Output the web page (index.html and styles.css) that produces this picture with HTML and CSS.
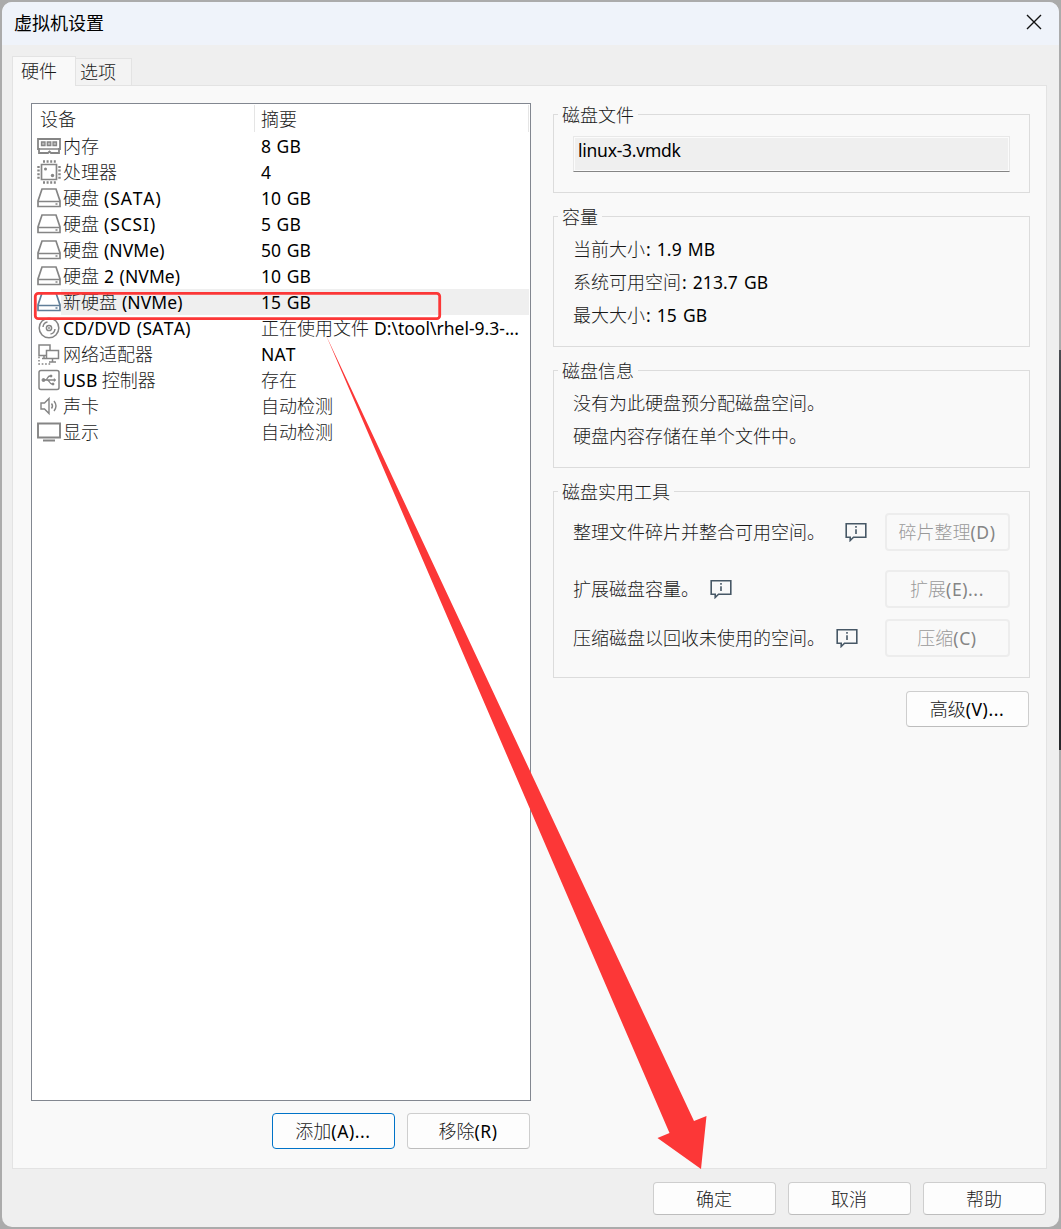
FILE: index.html
```html
<!DOCTYPE html>
<html lang="zh-CN">
<head>
<meta charset="utf-8">
<title>虚拟机设置</title>
<link rel="stylesheet" href="styles.css">
</head>
<body>
<svg class="defs" width="0" height="0" aria-hidden="true">
  <symbol id="disk" viewBox="0 0 24 20"><path d="M5 1h14l4 12v5.500H1V13zM1 13.500h22" fill="#fff" stroke="currentColor" stroke-width="1.700"/><path d="M18.500 16h2" stroke="currentColor" stroke-width="1.500"/></symbol>
  <symbol id="info" viewBox="0 0 22 20"><path d="M1.200 1.700h19.600v13.600H8.500L5.200 18.500v-3.200h-4z" fill="none" stroke="#475866" stroke-width="1.600"/><path d="M11 4v1.800M11 7.200V12" stroke="#475866" stroke-width="1.600"/></symbol>
</svg>
<main class="window">
  <header class="titlebar"><h1>虚拟机设置</h1>
    <svg class="close" viewBox="0 0 16 16"><path d="M1 1l14 14M15 1L1 15" stroke="#111" stroke-width="1.400"/></svg>
  </header>
  <nav class="tabs"><span class="tab active">硬件</span><span class="tab">选项</span></nav>
  <section class="panel">
    <div class="left">
      <div class="list">
        <div class="head"><span>设备</span><span>摘要</span></div>
        <div class="row"><svg viewBox="0 0 24 20"><path d="M1 3h22v10h-1v4h-8l-1.500-1.500L11 17H2v-4H1z" fill="none" stroke="currentColor" stroke-width="1.800"/><path d="M2 13h20" stroke="currentColor" stroke-width="1.300"/><path d="M4.500 6h3.500v3.500H4.500zM10.300 6h3.500v3.500h-3.500zM16 6h3.500v3.500H16z" fill="#bbb" stroke="currentColor" stroke-width="1.300"/></svg><span>内存</span><span class="en">8 GB</span></div>
        <div class="row"><svg class="tall" viewBox="0 0 24 24"><path d="M4.500 4.500h15v15h-15z" fill="none" stroke="currentColor" stroke-width="1.700"/><path d="M6 1.500h13M6 22.500h13" stroke="currentColor" stroke-width="2.400" stroke-dasharray="2 1.600"/><path d="M1.500 6v13M22.500 6v13" stroke="currentColor" stroke-width="2.400" stroke-dasharray="2 1.600"/><circle cx="8.500" cy="9" r="1.500" fill="currentColor"/><circle cx="15.500" cy="15.500" r="1.700" fill="currentColor"/></svg><span>处理器</span><span class="en">4</span></div>
        <div class="row"><svg><use href="#disk"/></svg><span>硬盘 <b class="en caps">(SATA)</b></span><span class="en">10 GB</span></div>
        <div class="row"><svg><use href="#disk"/></svg><span>硬盘 <b class="en caps">(SCSI)</b></span><span class="en">5 GB</span></div>
        <div class="row"><svg><use href="#disk"/></svg><span>硬盘 <b class="en">(NVMe)</b></span><span class="en">50 GB</span></div>
        <div class="row"><svg><use href="#disk"/></svg><span>硬盘 <b class="en">2 (NVMe)</b></span><span class="en">10 GB</span></div>
        <div class="row selected"><svg><use href="#disk"/></svg><span>新硬盘 <b class="en">(NVMe)</b></span><span class="en">15 GB</span></div>
        <div class="row"><svg class="tall" viewBox="0 0 24 24" fill="none" stroke="currentColor"><circle cx="12" cy="12" r="9.800" stroke-width="1.500"/><circle cx="12" cy="12" r="2.600" stroke-width="1.500"/><circle cx="12" cy="12" r=".6"/><path d="M6 11c.3-2.500 2-4.700 4.500-5M18 13c-.3 2.500-2 4.700-4.500 5" stroke-width="1.500"/></svg><span class="en disc">CD/DVD (SATA)</span><span>正在使用文件 <b class="en path">D:\tool\rhel-9.3-...</b></span></div>
        <div class="row"><svg class="tall" viewBox="0 0 24 24" fill="none" stroke="currentColor" stroke-width="1.500"><path d="M9 13.500H2V3h11v5M5 16.500h4M7 13v3M9.500 8.500h12v8h-12zM15.500 17v3M12 20h7"/><path d="M2 14.500v7.500h12" stroke-dasharray="1.700 1.700"/></svg><span>网络适配器</span><span class="en">NAT</span></div>
        <div class="row"><svg class="tall" viewBox="0 0 24 24" fill="none" stroke="currentColor"><rect x="2" y="2.500" width="20" height="19" rx="2" stroke-width="1.500"/><path d="M6 12h12M8 12c3 0 2-4 5-4h1M10 12c3 0 2 4 5 4" stroke-width="1.300"/><circle cx="6.500" cy="12" r="1.500" fill="currentColor"/><path d="M13 7h2v2h-2zM15 15h2v2h-2zM17 10.500l2 1.500-2 1.500z" fill="currentColor" stroke-width=".5"/></svg><span><b class="en caps-s">USB</b> 控制器</span><span>存在</span></div>
        <div class="row"><svg viewBox="0 0 24 20" fill="none" stroke="currentColor" stroke-width="1.400"><path d="M4 7h3.500l4.500-4.500v15L7.500 13H4zM14.500 7.500q2 2.500 0 5M17 5q4 5 0 10"/></svg><span>声卡</span><span>自动检测</span></div>
        <div class="row"><svg viewBox="0 0 24 20"><path d="M1 1.500h22v14H1z" fill="none" stroke="currentColor" stroke-width="1.900"/><path d="M6 18.500h12" stroke="currentColor" stroke-width="2"/></svg><span>显示</span><span>自动检测</span></div>
      </div>
      <div class="actions"><button class="focus">添加<b class="en">(A)...</b></button><button>移除<b class="en">(R)</b></button></div>
    </div>
    <div class="right">
      <fieldset class="file"><legend>磁盘文件</legend><div class="field en">linux-3.vmdk</div></fieldset>
      <fieldset class="capacity"><legend>容量</legend><p>当前大小<b class="en">: 1.9 MB</b></p><p>系统可用空间<b class="en">: 213.7 GB</b></p><p>最大大小<b class="en">: 15 GB</b></p></fieldset>
      <fieldset class="about"><legend>磁盘信息</legend><p>没有为此硬盘预分配磁盘空间。</p><p>硬盘内容存储在单个文件中。</p></fieldset>
      <fieldset class="tools"><legend>磁盘实用工具</legend>
        <div class="tool"><span>整理文件碎片并整合可用空间。</span><svg class="wide"><use href="#info"/></svg><button disabled>碎片整理<b class="en">(D)</b></button></div>
        <div class="tool"><span>扩展磁盘容量。</span><svg><use href="#info"/></svg><button disabled>扩展<b class="en">(E)...</b></button></div>
        <div class="tool"><span>压缩磁盘以回收未使用的空间。</span><svg><use href="#info"/></svg><button disabled>压缩<b class="en">(C)</b></button></div>
      </fieldset>
      <button class="advanced">高级<b class="en">(V)...</b></button>
    </div>
  </section>
  <footer><button>确定</button><button>取消</button><button>帮助</button></footer>
</main>
<svg class="annotation" viewBox="0 0 1061 1229"><rect x="35.300" y="293.300" width="404.400" height="25.400" rx="3" fill="none" stroke="#fc3737" stroke-width="2.800"/><path d="M325.500 334L694 1121l12.500-5L701 1169l-43.500-31 12-5z" fill="#fc3737"/></svg>
</body>
</html>
```
FILE: styles.css
```css
* { box-sizing: border-box; }
body {
  margin: 0; padding: 2px; width: 1061px; height: 1229px; overflow: hidden;
  background:
    linear-gradient(#4a4d52, #26282b 35%) 1059px 350px / 2px 400px no-repeat,
    #ababab;
  color: #1a1a1a;
  font: 300 18px/26px "Noto Sans CJK SC", sans-serif;
}
b { font-weight: 400; }
.en {
  font-family: "Noto Sans", sans-serif; font-size: 17.5px; font-weight: 400;
  font-kerning: none; letter-spacing: .1px; word-spacing: .8px; color: #000;
}
b.en { margin-left: 1px; }
.caps { letter-spacing: .9px; }
.caps-s { letter-spacing: .3px; }
b.caps-s { margin-left: 0; }
.disc { letter-spacing: .3px; }
.path { letter-spacing: 0; }
.defs { position: absolute; }
.window {
  width: 1057px; height: 1225px; overflow: hidden;
  display: flex; flex-direction: column;
  background: #efefef; border-radius: 10px;
}
.titlebar {
  height: 43px; padding: 0 17px 3px 12px; flex: none;
  display: flex; align-items: center; justify-content: space-between;
  background: #eff3fa;
}
h1 { margin: 0; font-size: 18px; font-weight: 400; line-height: 24px; padding-bottom: 1px; color: #000; }
.close { width: 16px; height: 16px; }
.tabs { display: flex; align-items: flex-end; height: 40px; margin-left: 10px; flex: none; position: relative; }
.tab {
  width: 56px; height: 27px; padding-left: 4px; line-height: 25px;
  background: #f3f3f3; border: 1px solid #e3e3e3; border-bottom: 0; border-left: 0;
}
.tab.active {
  width: 64px; height: 30px; padding-left: 8px; margin-bottom: -1px; line-height: 26px;
  background: #f9f9f9; border-left: 1px solid #e3e3e3;
}
.panel {
  display: flex; flex: none; width: 1035px; height: 1084px; margin-left: 10px;
  padding: 17px 16px 0 18px; justify-content: space-between;
  background: #f9f9f9; border: 1px solid #e3e3e3;
}
.left { width: 500px; }
.list { height: 998px; background: #fff; border: 1px solid #828790; }
.head { display: grid; grid-template-columns: 223px 274px; height: 29px; padding-top: 1px; line-height: 27px; }
.head span { border-right: 1px solid #e5e5e5; height: 27px; padding-left: 8px; }
.head span + span { padding-left: 6px; }
.row {
  display: grid; grid-template-columns: 24px 196px 270px; column-gap: 2px;
  height: 26px; margin-right: 1px; padding-left: 5px; align-items: center;
  color: #1a1a1a; line-height: 24px; white-space: nowrap;
}
.row > span { height: 26px; }
.row > span.en { line-height: 26px; }
.row svg { width: 24px; height: 20px; color: #858585; }
.row svg.tall { height: 24px; }
.row.selected { background: linear-gradient(90deg, #fff 29px, #efefef 29px); }
.row.selected svg { color: #607e98; }
.actions { display: flex; justify-content: flex-end; gap: 12px; padding: 12px 1px 0; }
button {
  width: 123px; height: 36px; padding: 0 1px 2px 0; color: #1a1a1a;
  font: inherit; line-height: 30px; text-align: center;
  background: #fdfdfd; border: 1px solid #cecece; border-bottom-color: #bdbdbd; border-radius: 4px;
}
button b.en { margin-left: 0; letter-spacing: .6px; }
button.focus { border-color: #0073c8; }
.right { display: flex; flex-direction: column; width: 477px; padding-top: 11px; }
fieldset { position: relative; margin: 0 0 23px; padding: 0 19px; border: 1px solid #dcdcdc; min-width: 0; }
legend { position: absolute; left: 4px; top: -14px; padding: 0 4px; background: #f9f9f9; }
.file { height: 79px; padding-top: 21px; }
.field {
  height: 36px; width: 437px; padding-left: 4px; line-height: 27px; letter-spacing: -.25px;
  background: #efefef; border: 1px solid #e8e8e8; border-bottom-color: #858585;
  box-shadow: inset 0 0 0 1px #fbfbfb;
}
.capacity { height: 131px; padding-top: 16px; }
.about { height: 98px; padding-top: 16px; }
p { margin: 0; height: 33px; line-height: 31px; }
p b.en { word-spacing: 1.3px; margin-left: 1px; }
.tools { height: 187px; padding-top: 21px; margin-bottom: 13px; }
.tool { display: flex; align-items: center; height: 38px; white-space: nowrap; }
.tool > span { line-height: 26px; padding-bottom: 2px; }
.tool + .tool { margin-top: 19px; }
.tool + .tool + .tool { margin-top: 11px; }
.tool svg { width: 22px; height: 20px; margin: 0 0 0 11px; }
.tool svg.wide { margin-left: 20px; }
.tool button { margin-left: auto; }
button:disabled { width: 125px; height: 38px; background: #f9f9f9; border: 2px solid #ededed; color: #999; }
button:disabled .en { color: #858585; }
.advanced { align-self: flex-end; margin-right: 1px; }
footer { display: flex; justify-content: flex-end; gap: 12px; padding: 13px 13px 0 0; }
footer button { height: 33px; }
.annotation { position: absolute; left: 0; top: 0; width: 1061px; height: 1229px; pointer-events: none; }
```
